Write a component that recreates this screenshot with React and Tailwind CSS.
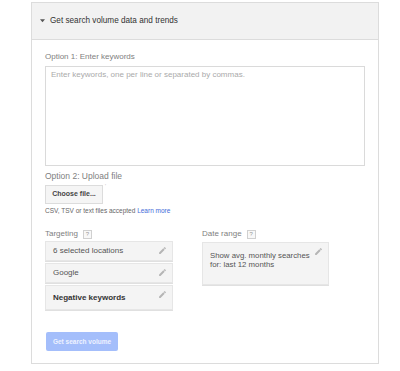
import React from "react";

function Pencil({ className = "" }) {
  return (
    <svg width="9" height="9" viewBox="0 0 24 24" className={className}>
      <path
        fill="#b5b5b5"
        d="M3 17.25V21h3.75L17.81 9.94l-3.75-3.75L3 17.25zM20.71 7.04a1 1 0 000-1.41l-2.34-2.34a1 1 0 00-1.41 0l-1.83 1.83 3.75 3.75 1.83-1.83z"
      />
    </svg>
  );
}

function Help() {
  return (
    <span className="ml-[5px] inline-flex h-[9px] w-[9px] items-center justify-center border border-[#d0d0d0] bg-[#f8f8f8] text-[6px] leading-none text-[#999]">
      ?
    </span>
  );
}

function Card({ children, h, bold }) {
  return (
    <div
      className={`relative flex items-center border border-[#e6e6e6] bg-[#f4f4f4] pl-[7px] pr-[6px] shadow-[0_1px_0_#e0e0e0] ${h}`}
    >
      <span
        className={`text-[8px] leading-[10px] ${
          bold ? "font-bold text-[#333]" : "text-[#555]"
        }`}
      >
        {children}
      </span>
      <Pencil className="absolute right-[5px] top-[4px]" />
    </div>
  );
}

export default function App() {
  return (
    <div className="h-[371px] w-[400px] bg-white pt-[2px] pl-[31px] font-['Liberation_Sans',Arial,sans-serif]">
      <div className="w-[348px] border border-[#dcdcdc] bg-white">
        <div className="flex h-[37px] items-center border-b border-[#dcdcdc] bg-[#f2f2f2] pl-[8px]">
          <svg width="5" height="4" viewBox="0 0 6 4" className="mr-[5px]">
            <path d="M0 0h6L3 3.5z" fill="#555" />
          </svg>
          <span className="text-[8.2px] leading-[10px] text-[#333]">
            Get search volume data and trends
          </span>
        </div>

        <div className="pl-[13px] pr-[12px] pt-[12px] pb-[12px]">
          <div className="text-[8px] leading-[10px] text-[#808080]">
            Option 1: Enter keywords
          </div>
          <div className="mt-[4px] h-[100px] w-[320px] border border-[#dadada] bg-white px-[5px] pt-[3px] text-[8px] leading-[10px] text-[#aaa]">
            Enter keywords, one per line or separated by commas.
          </div>

          <div className="mt-[5px] text-[8.5px] leading-[10px] text-[#808080]">
            Option 2: Upload file
          </div>
          <div className="mt-[4px] flex items-start">
            <div className="flex h-[19px] w-[58px] items-center justify-center border border-[#dcdcdc] bg-[#f5f5f5] text-[7px] font-bold text-[#444]">
              Choose file...
            </div>
            <span className="ml-[2px] mt-[-1px] text-[5px] leading-none text-[#bbb]">'</span>
          </div>
          <div className="mt-[2px] text-[6.5px] leading-[10px] text-[#666]">
            CSV, TSV or text files accepted{" "}
            <span className="text-[#3f6ad8]">Learn more</span>
          </div>

          <div className="mt-[13px] flex">
            <div className="w-[128px]">
              <div className="flex items-center text-[8px] leading-[10px] text-[#808080]">
                Targeting
                <Help />
              </div>
              <div className="mt-[2px] flex flex-col gap-[2px]">
                <Card h="h-[20px]">6 selected locations</Card>
                <Card h="h-[20px]">Google</Card>
                <Card h="h-[25px]" bold>
                  Negative keywords
                </Card>
              </div>
            </div>
            <div className="ml-[29px] w-[127px]">
              <div className="flex items-center text-[8px] leading-[10px] text-[#808080]">
                Date range
                <Help />
              </div>
              <div className="relative mt-[3px] h-[43px] border border-[#e6e6e6] bg-[#f4f4f4] pl-[7px] pr-[14px] pt-[8px] shadow-[0_1px_0_#e0e0e0]">
                <div className="text-[7.8px] leading-[9px] text-[#555]">
                  Show avg. monthly searches
                  <br />
                  for: last 12 months
                </div>
                <Pencil className="absolute right-[5px] top-[4px]" />
              </div>
            </div>
          </div>

          <div className="ml-[1px] mt-[22px] flex h-[19px] w-[72px] items-center justify-center rounded-[2px] bg-[#a4befb] text-[6.5px] font-bold text-[#eef2ff]">
            Get search volume
          </div>
        </div>
      </div>
    </div>
  );
}
